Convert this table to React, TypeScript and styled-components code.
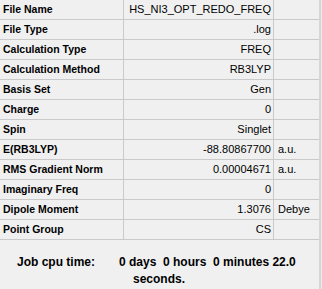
import React from 'react';
import styled, { createGlobalStyle } from 'styled-components';

type Entry = {
  label: string;
  value: string;
  unit?: string;
};

const entries: Entry[] = [
  { label: 'File Name', value: 'HS_NI3_OPT_REDO_FREQ' },
  { label: 'File Type', value: '.log' },
  { label: 'Calculation Type', value: 'FREQ' },
  { label: 'Calculation Method', value: 'RB3LYP' },
  { label: 'Basis Set', value: 'Gen' },
  { label: 'Charge', value: '0' },
  { label: 'Spin', value: 'Singlet' },
  { label: 'E(RB3LYP)', value: '-88.80867700', unit: 'a.u.' },
  { label: 'RMS Gradient Norm', value: '0.00004671', unit: 'a.u.' },
  { label: 'Imaginary Freq', value: '0' },
  { label: 'Dipole Moment', value: '1.3076', unit: 'Debye' },
  { label: 'Point Group', value: 'CS' },
];

const App = () => {
  return (
    <>
      <GlobalStyle />
      <Panel>
        <Body>
          <Table>
            {entries.map((e) => (
              <Row key={e.label}>
                <Label>{e.label}</Label>
                <Value>{e.value}</Value>
                <Unit>{e.unit ?? ''}</Unit>
              </Row>
            ))}
          </Table>
          <Footer>
            <CpuLabel>Job cpu time:</CpuLabel>
            <CpuValue>
              <span>{'0 days  0 hours  0 minutes 22.0'}</span>
              <Wrapped>seconds.</Wrapped>
            </CpuValue>
          </Footer>
        </Body>
        <Edge />
      </Panel>
    </>
  );
};

export default App;

const GlobalStyle = createGlobalStyle`
  html, body {
    margin: 0;
    padding: 0;
    background: #f0f0f0;
  }
  body {
    font-family: "Liberation Sans", Arial, sans-serif;
    font-size: 11px;
    color: #000;
  }
`;

const Panel = styled.div`
  display: flex;
  width: 322px;
  height: 289px;
  background: #f0f0f0;
  overflow: hidden;
`;

const Body = styled.div`
  width: 319px;
  display: flex;
  flex-direction: column;
`;

const Edge = styled.div`
  width: 3px;
  border-left: 2px solid #d6d6d6;
  box-sizing: border-box;
  background: #ebebeb;
`;

const Table = styled.div`
  display: flex;
  flex-direction: column;
`;

const Row = styled.div`
  display: grid;
  grid-template-columns: 124px 150px 45px;
  height: 20px;
  box-sizing: border-box;
  border-bottom: 1px solid #cacaca;
  line-height: 19px;
`;

const Label = styled.div`
  padding-left: 3px;
  font-size: 10.5px;
  font-weight: bold;
  border-right: 1px solid #cacaca;
  white-space: nowrap;
  overflow: hidden;
`;

const Value = styled.div`
  padding-right: 2px;
  text-align: right;
  border-right: 1px solid #cacaca;
  white-space: nowrap;
  overflow: hidden;
`;

const Unit = styled.div`
  padding-left: 4px;
  white-space: nowrap;
`;

const Footer = styled.div`
  display: flex;
  padding-top: 14px;
  font-size: 12px;
  font-weight: bold;
  line-height: 17px;
`;

const CpuLabel = styled.div`
  width: 102px;
  padding-left: 17px;
  white-space: nowrap;
`;

const CpuValue = styled.div`
  display: flex;
  flex-direction: column;
  white-space: pre;
`;

const Wrapped = styled.span`
  padding-left: 14px;
`;
